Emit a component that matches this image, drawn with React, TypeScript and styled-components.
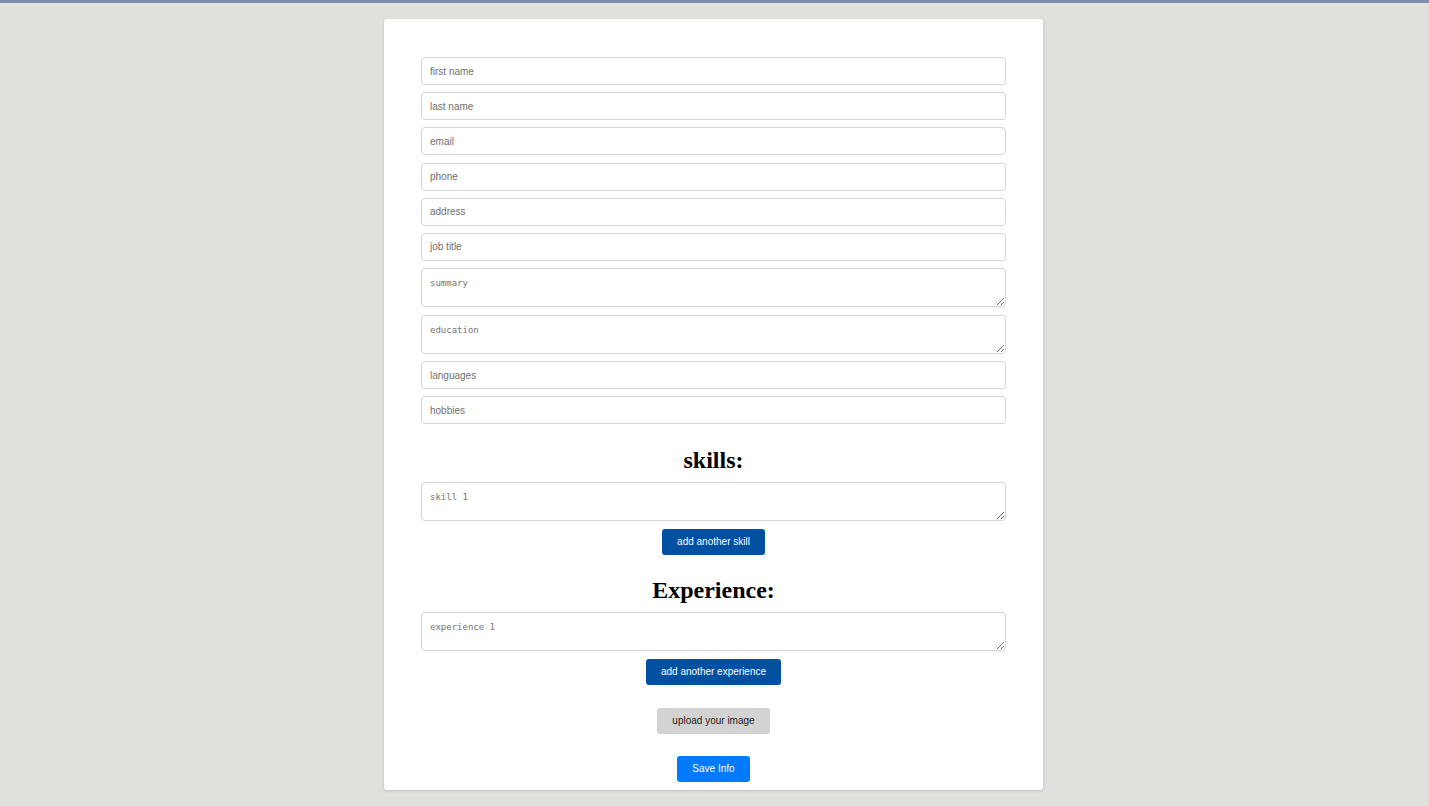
import React from "react";
import styled, { createGlobalStyle } from "styled-components";

const GlobalStyle = createGlobalStyle`
  html, body {
    margin: 0;
    padding: 0;
    background: #e0e0dc;
    font-family: "Liberation Sans", Arial, sans-serif;
  }
`;

const TopBar = styled.div`
  height: 3px;
  background: #7a8fae;
`;

const Page = styled.div`
  display: flex;
  justify-content: center;
  padding: 16px 0;
`;

const Card = styled.form`
  width: 585px;
  margin-left: -2px;
  background: #ffffff;
  border-radius: 3px;
  box-shadow: 0 1px 3px rgba(0, 0, 0, 0.15);
  padding: 38px 37px 8px 37px;
  display: flex;
  flex-direction: column;
  align-items: center;
`;

const TextField = styled.input`
  box-sizing: border-box;
  width: 100%;
  height: 28px;
  margin: 0 0 7.2px 0;
  padding: 0 8px;
  border: 1px solid #d4d4d4;
  border-radius: 4px;
  font-family: "Liberation Sans", Arial, sans-serif;
  font-size: 10px;
  color: #333;
  outline: none;

  &::placeholder {
    color: #6f6f6f;
  }
`;

const TextArea = styled.textarea<{ $gap?: number }>`
  box-sizing: border-box;
  width: 100%;
  height: 39px;
  margin: 0 0 ${(p) => p.$gap ?? 8}px 0;
  padding: 9px 8px 5px 8px;
  border: 1px solid #d4d4d4;
  border-radius: 4px;
  font-family: "DejaVu Sans Mono", "Liberation Mono", monospace;
  font-size: 9px;
  color: #333;
  outline: none;
  display: block;

  &::placeholder {
    color: #747474;
  }
`;

const Heading = styled.h2<{ $top: number }>`
  margin: ${(p) => p.$top}px 0 8px 0;
  font-family: "Liberation Serif", "Times New Roman", serif;
  font-size: 24px;
  font-weight: bold;
  line-height: 28px;
  color: #000;
`;

const Button = styled.button<{ $variant: "navy" | "grey" | "blue" }>`
  height: 26px;
  padding: 0 15px;
  border: none;
  border-radius: 3px;
  font-family: "Liberation Sans", Arial, sans-serif;
  font-size: 10px;
  cursor: pointer;
  background: ${(p) =>
    p.$variant === "navy" ? "#0050a2" : p.$variant === "grey" ? "#d3d3d3" : "#007bff"};
  color: ${(p) => (p.$variant === "grey" ? "#1a1a1a" : "#ffffff")};
`;

const ButtonRow = styled.div<{ $top: number }>`
  margin-top: ${(p) => p.$top}px;
  display: flex;
  justify-content: center;
`;

const fields = ["first name", "last name", "email", "phone", "address", "job title"];

export default function App() {
  return (
    <>
      <GlobalStyle />
      <TopBar />
      <Page>
        <Card onSubmit={(e) => e.preventDefault()}>
          {fields.map((f) => (
            <TextField key={f} placeholder={f} />
          ))}
          <TextArea placeholder="summary" />
          <TextArea placeholder="education" $gap={7} />
          <TextField placeholder="languages" />
          <TextField placeholder="hobbies" />
          <Heading $top={14}>skills:</Heading>
          <TextArea placeholder="skill 1" $gap={0} />
          <ButtonRow $top={8}>
            <Button type="button" $variant="navy">add another skill</Button>
          </ButtonRow>
          <Heading $top={21}>Experience:</Heading>
          <TextArea placeholder="experience 1" $gap={0} />
          <ButtonRow $top={8}>
            <Button type="button" $variant="navy">add another experience</Button>
          </ButtonRow>
          <ButtonRow $top={23}>
            <Button type="button" $variant="grey">upload your image</Button>
          </ButtonRow>
          <ButtonRow $top={22}>
            <Button type="submit" $variant="blue">Save Info</Button>
          </ButtonRow>
        </Card>
      </Page>
    </>
  );
}
